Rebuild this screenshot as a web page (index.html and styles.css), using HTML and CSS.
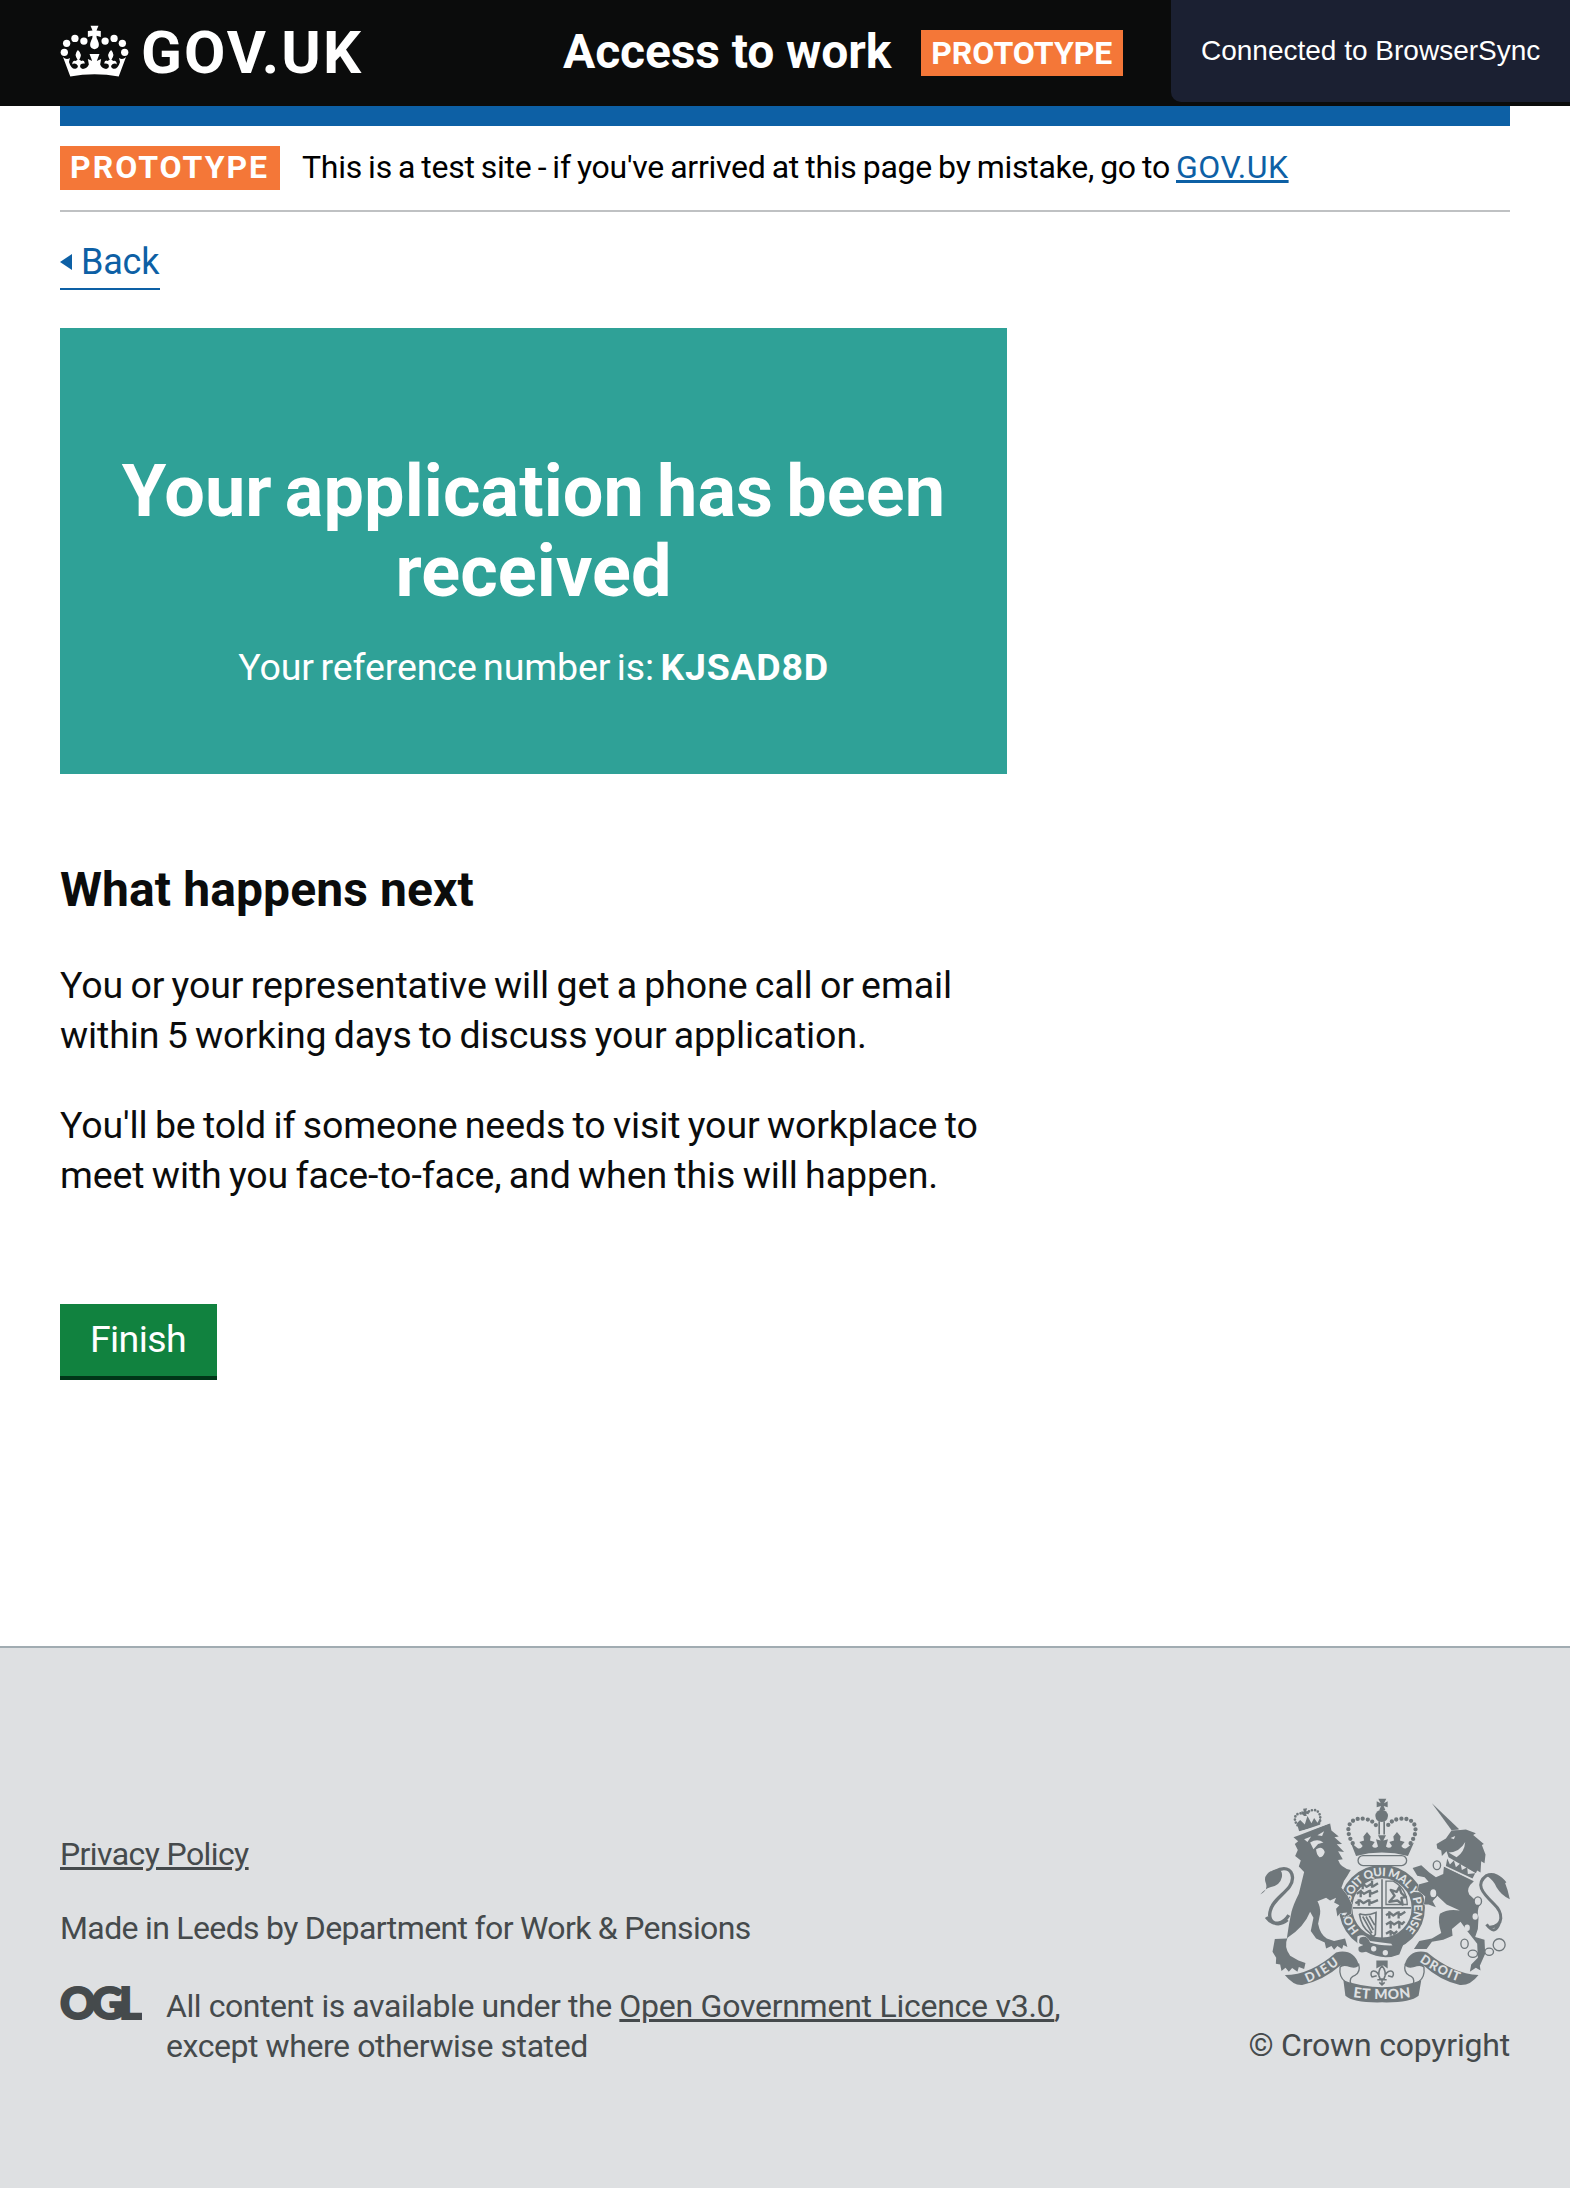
FILE: index.html
```html
<!DOCTYPE html>
<html lang="en">
<head>
<meta charset="utf-8">
<title>Access to work</title>
<link rel="stylesheet" href="styles.css">
</head>
<body>
<header class="header">
  <a class="logo" href="#">
    <svg class="crown" viewBox="61 76 208 156" aria-hidden="true">
      <g fill="#fff">
        <circle cx="74" cy="158" r="11"/><circle cx="81" cy="131" r="11"/><circle cx="106" cy="116" r="11"/><circle cx="133" cy="124" r="11"/>
        <circle cx="256" cy="158" r="11"/><circle cx="249" cy="131" r="11"/><circle cx="224" cy="116" r="11"/><circle cx="197" cy="124" r="11"/>
        <path d="M153 78H177L171 92L184 94V112L171 108Q170 114 175 122Q182 138 174 145Q165 152 156 145Q148 138 155 122Q160 114 159 108L145 112V94L159 92Z"/>
        <path d="M70 172Q80 182 91 175L88 187Q96 212 110 207Q120 200 110 193Q101 190 98 195Q98 182 108 184L114 180Q102 164 115 151Q130 164 119 180L126 184Q134 180 136 192Q128 190 123 195Q118 205 130 208Q142 208 148 195L145 178L158 184L150 163H180L172 184L185 178L182 195Q188 208 200 208Q212 205 207 195Q202 190 194 192Q196 180 204 184L211 180Q200 164 215 151Q228 164 216 180L222 184Q232 182 232 195Q229 190 220 193Q210 200 220 207Q234 212 242 187L239 175Q250 182 260 172L238 231Q165 217 92 231Z"/>
      </g>
    </svg>
    <span class="logo-text">GOV.UK</span>
  </a>
  <span class="service">Access to work</span>
  <strong class="header-tag">PROTOTYPE</strong>
</header>
<div class="sync">Connected to BrowserSync</div>
<main class="main">
  <div class="bar"></div>
  <div class="phase">
    <strong class="phase-tag">PROTOTYPE</strong>
    <p class="phase-text">This is a test site - if you've arrived at this page by mistake, go to <a href="#">GOV.UK</a></p>
  </div>
  <a class="back" href="#">Back</a>
  <section class="panel">
    <h1>Your application has been received</h1>
    <p>Your reference number is: <strong>KJSAD8D</strong></p>
  </section>
  <section class="next">
    <h2>What happens next</h2>
    <p>You or your representative will get a phone call or email<br>within 5 working days to discuss your application.</p>
    <p>You'll be told if someone needs to visit your workplace to<br>meet with you face-to-face, and when this will happen.</p>
  </section>
  <button class="button">Finish</button>
</main>
<footer class="footer">
  <div class="meta">
    <a class="privacy" href="#">Privacy Policy</a>
    <p class="made">Made in Leeds by Department for Work &amp; Pensions</p>
    <div class="licence">
      <svg class="ogl" viewBox="0 0 82 36" role="img" aria-label="OGL"><text class="ogl-text" x="0" y="33" textLength="82" lengthAdjust="spacing">OGL</text></svg>
      <p>All content is available under the <a class="ogl-link" href="#">Open Government Licence v3.0</a>,<br>except where otherwise stated</p>
    </div>
  </div>
  <div class="copyright">
    <svg class="crest" viewBox="90 52 750 616" aria-hidden="true">
      <defs>
        <path id="motto" d="M388 450A96 96 0 1 1 526 448"/>
        <path id="dieu" d="M232 607Q285 585 330 548"/>
        <path id="etmon" d="M369 650Q456 663 544 650"/>
        <path id="droit" d="M568 543Q630 585 690 605"/>
      </defs>
      <!-- garter and shield -->
      <circle cx="456" cy="382" r="134" class="paper"/>
      <circle cx="456" cy="382" r="109" fill="none" stroke="#6f777b" stroke-width="40"/>
      <text class="motto" font-size="35"><textPath href="#motto" textLength="448">HONI SOIT QUI MAL Y PENSE</textPath></text>
      <g fill="none" stroke="#6f777b">
        <path stroke-width="5" d="M456 296V478M368 382H544"/>
        <g stroke-width="7" stroke-linejoin="round">
          <path d="M390 316l10-5 10 8 12-8 8 6 14-9M380 340l12-8 10 8 14-8 10 7 18-8M376 368l14-8 10 8 14-8 10 7 20-8M398 304v22M426 300v22M392 328v22M420 328v22M386 356v20M418 356v20"/>
          <path d="M468 404l12-7 10 8 12-8 10 6 14-9M468 432l14-8 10 8 14-8 10 7 8-8M468 460l14-8 10 8 10-8M478 392v22M506 392v22M482 422v22M508 422v22M482 450v16"/>
          <path d="M478 364l16-18-12-18 18 6 8-14 6 18 14 12-14 2 4 20-16-12z"/>
        </g>
        <path stroke-width="4" d="M468 302V372H532Q530 324 490 302Z"/>
        <path stroke-width="5" d="M388 400Q410 408 438 396L436 462Q428 474 420 458Q394 440 388 400M398 408L426 458M408 408L430 448M418 406L434 434"/>
      </g>
      <path class="paper" d="M382 468Q404 456 420 482L484 490L492 504L478 518L400 520Q378 500 382 468Z"/>
      <path class="ink" d="M390 472Q412 462 420 486Q460 500 520 492L508 522Q460 542 408 514Q380 522 386 500L400 494Q380 490 390 472Z"/>
      <circle class="paper" cx="431" cy="505" r="8"/><circle class="paper" cx="466" cy="517" r="8"/>
      <rect x="384" y="225" width="146" height="30" rx="15" fill="#dee0e2" stroke="#6f777b" stroke-width="4"/>
      <g class="ink animals">
        <!-- lion -->
        <path d="M190 170L207 164L300 128L304 150L326 168L313 170L336 190L320 191L342 214L324 212L338 236L324 238Q332 262 362 268L352 286Q340 300 334 322L352 345L366 372L364 400L340 412L352 396L330 398L322 408L318 385L328 374L312 366L318 352L300 360L288 352L262 362Q272 380 270 400L264 430Q270 462 290 474L312 482L345 474L352 500L340 494L336 506L322 497L312 508L304 497L288 504L284 486L258 474L242 452L250 412L240 394Q222 440 172 472Q160 500 180 526L205 540L226 548L222 566L206 560L202 574L186 563L176 574L166 562L154 572L150 552L137 550L138 532L127 514L134 476L170 474Q176 430 184 394Q190 372 206 340L222 274L206 258L212 240L195 226L203 208L194 190L204 182Z"/>
        <path d="M90 342Q116 328 106 305Q98 282 130 268Q160 262 155 290Q150 315 120 320Q104 325 90 342Z"/>
        <!-- unicorn -->
        <path d="M606 68L688 146L670 156Z"/>
        <path d="M620 190L648 174L665 150L692 148L708 147L738 158L730 163L762 190L756 193L767 222L764 248L754 242L752 276L742 270L738 278L656 230L650 212L636 226L634 210L622 204Z"/>
        <path d="M642 258L732 302Q706 324 718 342L750 372Q740 392 746 412L744 446L736 470L764 478L766 520L750 556L752 570L738 562L720 574L724 552L744 532L742 490L712 452L692 424L666 446L668 466L640 478L606 484L590 506L552 506L568 482L606 474L634 458Q622 420 630 400Q652 384 690 390L650 372L622 346L608 362L618 380L596 372L582 372L586 348L564 330L566 312L596 304L584 290L562 286L548 262L574 254L598 276L618 290L640 280Z"/>
        <path d="M770 285Q800 272 824 302Q834 326 840 356Q815 345 800 320Q792 300 770 285Z"/>
      </g>
      <g class="ink">
        <!-- imperial crown -->
        <path d="M445 54H469L462 68L473 62V80L461 76L466 88H448L453 76L440 80V62L452 68Z"/>
        <path d="M436 106A19 19 0 0 1 474 106Q472 124 455 124Q438 124 436 106Z"/>
        <path d="M445 122H450V162H445ZM460 122H465V162H460Z"/>
        <path d="M362 186L382 202Q390 208 398 196L388 184L402 180L400 168L411 154L422 168L420 180L434 184L426 196Q434 206 444 198L438 176L452 180L444 164H468L460 180L474 176L468 198Q478 206 486 196L478 184L492 180L490 168L501 154L512 168L510 180L524 184L514 196Q522 208 530 202L552 186L534 226Q455 206 378 226Z"/>
        <!-- lion's crown -->
        <path d="M200 128L207 152L270 136L272 110L262 126L252 112L244 128L232 106L224 132L210 118Z"/>
        <path d="M219 84L231 83L228 92L236 91V101L228 99L230 106H220L222 99L214 102V92L221 93Z"/>
      </g>
      <g fill="none" stroke="#6f777b">
        <path stroke-width="10" d="M172 418C142 442 112 426 120 392C128 350 190 330 187 290C184 262 160 258 135 273M176 404C160 430 130 440 108 410"/>
        <path stroke-width="9" d="M780 440C824 438 820 396 792 370C756 336 736 310 770 285C790 276 812 288 826 308M770 432C790 458 800 450 808 430"/>
        <g stroke-width="13" stroke-linecap="round" stroke-dasharray="0 15">
          <path d="M368 188C344 150 352 112 398 114Q425 116 438 134"/>
          <path d="M542 188C568 150 560 112 514 114Q486 116 474 134"/>
        </g>
        <g stroke-width="8" stroke-linecap="round" stroke-dasharray="0 9.5">
          <path d="M202 134C184 110 200 92 222 100"/>
          <path d="M270 120C274 92 254 80 234 94"/>
        </g>
        <g stroke-width="4" fill="#dee0e2">
          <ellipse cx="621" cy="254" rx="11" ry="13"/><ellipse cx="610" cy="338" rx="11" ry="14"/><ellipse cx="744" cy="362" rx="11" ry="13"/>
          <ellipse cx="704" cy="490" rx="11" ry="14"/><ellipse cx="729" cy="520" rx="14" ry="11"/><ellipse cx="778" cy="514" rx="13" ry="11"/><circle cx="808" cy="493" r="18"/>
        </g>
      </g>
      <!-- details cut out of the animals -->
      <g class="paper">
        <path d="M200 156L300 122L302 127L204 162Z"/>
        <path d="M222 176L243 168L232 184ZM262 164L282 152L276 166ZM258 206Q276 194 284 214Q280 230 268 230Q258 220 258 206ZM240 186Q262 172 280 186L264 190L250 206Z"/>
        <path d="M662 172L676 166L672 176ZM656 216Q690 214 706 184Q704 214 680 230Z"/>
        <path d="M648 228L742 282L732 300L642 258Z"/>
        <ellipse cx="736" cy="408" rx="8" ry="10"/><ellipse cx="712" cy="442" rx="8" ry="10"/>
      </g>
      <path class="ink" d="M648 256L652 234L660 252L672 240L678 260L692 248L696 268L712 260L714 280L736 278L728 294Z"/>
      <path d="M439 540H473V564L458 554L439 564Z" class="ink"/>
      <path fill="none" stroke="#6f777b" stroke-width="4.5" d="M456 556Q440 575 450 596H462Q472 575 456 556ZM450 594C440 560 414 570 426 590M426 590L440 586M462 594C472 560 500 570 487 590M487 590L474 586M442 598H470M456 598V612M448 606L456 614L464 606"/>
      <!-- ribbon -->
      <path class="ink" d="M164 584Q240 584 318 516Q370 504 386 552Q384 568 364 572L354 560L330 556Q280 600 216 614Q190 616 164 584Z"/>
      <path class="ink" d="M746 584Q670 580 592 516Q540 504 524 552Q528 568 550 572L558 560L582 556Q630 600 690 614Q722 616 746 584Z"/>
      <path class="ink" d="M340 600Q456 642 574 600L566 646Q540 668 456 666Q370 668 346 646Z"/>
      <path fill="#dee0e2" stroke="#6f777b" stroke-width="4" d="M330 560Q326 590 346 604L362 610Q356 590 376 584Q392 574 386 552Q378 566 352 556Q338 552 330 560ZM582 560Q586 590 566 604L550 610Q556 590 536 584Q520 574 526 552Q534 566 560 556Q574 552 582 560Z"/>
      <g class="motto">
        <text font-size="38"><textPath href="#dieu" textLength="112">DIEU</textPath></text>
        <text font-size="42"><textPath href="#etmon" textLength="174">ET MON</textPath></text>
        <text font-size="38"><textPath href="#droit" textLength="132">DROIT</textPath></text>
      </g>
    </svg>
    <a href="#">© Crown copyright</a>
  </div>
</footer>
</body>
</html>
```
FILE: styles.css
```css
* { box-sizing: border-box; }
body { margin: 0; position: relative; background: #fff; color: #0b0c0c; font-family: Roboto, "Liberation Sans", sans-serif; }
h1, h2, p { margin: 0; }
a { color: inherit; }

.header { display: flex; align-items: flex-start; height: 106px; padding-left: 60px; background: #0b0c0c; color: #fff; }
.logo { display: flex; flex: none; width: 503px; gap: 12px; color: #fff; text-decoration: none; }
.crown { width: 69px; height: 52px; margin-top: 25px; flex: none; }
.logo-text { margin-top: 23px; font-size: 60px; line-height: 60px; font-weight: 700; letter-spacing: 2.1px; white-space: nowrap; }
.service { margin-top: 22px; font-size: 48px; line-height: 60px; font-weight: 700; letter-spacing: -0.1px; white-space: nowrap; }
.header-tag { flex: none; margin: 30px 0 0 30px; padding-left: 10px; width: 202px; height: 46px; background: #f47738; font-size: 32px; line-height: 46px; }
.sync { position: absolute; top: 0; right: 0; width: 399px; height: 102px; padding-left: 30px; background: #1b2032; border-bottom-left-radius: 10px; color: #fff; font: 28px/101px "Liberation Sans", sans-serif; white-space: nowrap; }

.main { padding: 0 60px; }
.bar { height: 20px; background: #0d60a5; }
.phase { display: flex; align-items: flex-start; height: 86px; padding-top: 20px; border-bottom: 2px solid #bfc1c3; color: #000; font-size: 32px; }
.phase-tag { width: 220px; height: 44px; padding-left: 10px; background: #f47738; color: #fff; line-height: 42px; letter-spacing: 2px; }
.phase-text { margin: 1px 0 0 22px; line-height: 40px; letter-spacing: -0.25px; word-spacing: -1.58px; white-space: nowrap; }
.phase-text a { color: #0d60a5; letter-spacing: 0.5px; }
.back { display: flex; align-items: flex-start; width: 100px; height: 48px; margin-top: 30px; border-bottom: 2px solid #0d60a5; color: #0d60a5; font-size: 36px; line-height: 41px; letter-spacing: -0.2px; text-decoration: none; }
.back::before { content: ""; margin: 12px 9px 0 0; border: solid transparent; border-width: 8px 12px 8px 0; border-right-color: #0d60a5; }
.panel { width: 947px; height: 446px; margin-top: 38px; padding: 124px 40px 0; background: #2fa197; color: #fff; text-align: center; }
.panel h1 { font-size: 72px; line-height: 80px; letter-spacing: 0.1px; word-spacing: -5px; }
.panel p { margin-top: 30px; font-size: 37.5px; line-height: 50px; letter-spacing: -0.1px; word-spacing: -2.8px; }
.panel p strong { letter-spacing: 0.7px; }
.next { padding-top: 91px; font-size: 37.5px; line-height: 50px; letter-spacing: -0.1px; word-spacing: -1.9px; white-space: nowrap; }
.next h2 { margin-bottom: 45px; font-size: 48px; line-height: 50px; letter-spacing: 0.1px; word-spacing: 0; }
.next p + p { margin-top: 40px; }
.button { display: block; width: 157px; height: 72px; margin: 104px 0 270px; padding: 0 1px 2px 0; border: 0; background: #11823f; box-shadow: 0 4px 0 #003618; color: #fff; font: 37.5px/70px Roboto, sans-serif; letter-spacing: -0.6px; }

.footer { display: flex; justify-content: space-between; height: 542px; padding: 0 60px; border-top: 2px solid #a1acb2; background: #dee0e2; color: #454a4c; font-size: 32px; line-height: 40px; white-space: nowrap; }
.meta { padding-top: 186px; letter-spacing: -0.43px; }
.privacy, .made { letter-spacing: -0.6px; }
.made { margin-top: 34px; word-spacing: -0.3px; }
.licence { display: flex; margin-top: 38px; }
.ogl { width: 82px; height: 36px; margin-right: 24px; }
.ogl-text { font: 900 44px Lato, sans-serif; letter-spacing: 0; fill: #454a4c; stroke: #454a4c; stroke-width: 2px; }
.ogl-link { letter-spacing: -0.26px; }
.copyright { display: flex; flex-direction: column; align-items: flex-end; padding-top: 150px; }
.copyright a { margin-top: 22px; letter-spacing: -0.2px; text-decoration: none; }
.crest { display: block; width: 250px; height: 205px; overflow: visible; }
.ink { fill: #6f777b; }
.paper { fill: #dee0e2; }
.animals { stroke: #dee0e2; stroke-width: 3px; paint-order: stroke; }
.motto { fill: #dee0e2; font-family: Lato, sans-serif; font-weight: 900; letter-spacing: 0; }
```
